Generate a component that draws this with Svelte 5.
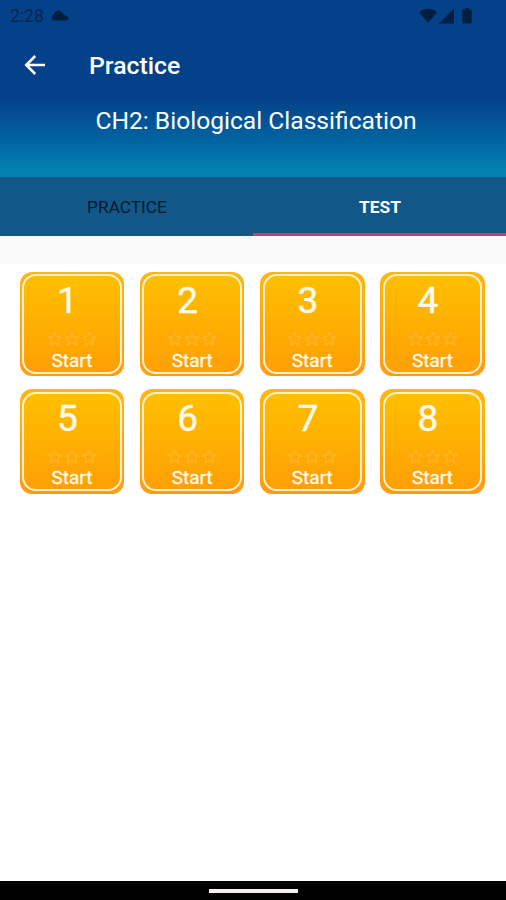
<script lang="ts">
  const tabs = ["PRACTICE", "TEST"];
  const levels = [1, 2, 3, 4, 5, 6, 7, 8];

  let activeTab = $state("TEST");
</script>

<div class="screen">
  <header>
    <div class="status">
      <span class="clock">2:28</span>
      <svg class="cloud" width="18" height="11" viewBox="0 0 18 11">
        <path d="M3 10.500H15.500C18 10.500 18 7.500 16 6.500L12 4C11 1 9 .5 7.500.5 5 .5 3.500 2 3 4.500 0 5.500 0 10.500 3 10.500z" />
      </svg>
      <svg class="system" width="56" height="17" viewBox="0 0 56 17">
        <path d="M1 4.200C6.500-.4 13.500-.4 19 4.200L10 15z" />
        <path d="M36 .500V15.500H21z" />
        <path d="M45.500 1.500h1.500V0h4v1.500h1.500q1.200 0 1.200 1.200v11.600q0 1.200-1.200 1.200h-7q-1.200 0-1.200-1.200V2.700q0-1.200 1.200-1.200z" />
      </svg>
    </div>
    <div class="toolbar">
      <button class="back" aria-label="Back">
        <svg width="22" height="20" viewBox="0 0 22 20">
          <path d="M21 10H2.500M11.200 1L2.200 10l9 9" />
        </svg>
      </button>
      <h1>Practice</h1>
    </div>
    <h2>CH2: Biological Classification</h2>
  </header>

  <nav>
    {#each tabs as tab (tab)}
      <button class="tab" class:active={activeTab === tab} onclick={() => (activeTab = tab)}>
        {tab}
      </button>
    {/each}
  </nav>

  <main>
    <div class="grid">
      {#each levels as level (level)}
        <button class="tile">
          <span class="frame">
            <span class="number">{level}</span>
            <svg class="stars" width="50" height="16" viewBox="0 0 52 16">
              {#each [0, 18, 36] as x (x)}
                <path
                  transform="translate({x} 0)"
                  d="M8 1l1.900 4.900 5.200.3-4 3.300 1.300 5.100L8 11.800l-4.400 2.800 1.300-5.100-4-3.300 5.200-.3z"
                />
              {/each}
            </svg>
            <span class="start">Start</span>
          </span>
        </button>
      {/each}
    </div>
  </main>

  <footer><span class="handle"></span></footer>
</div>

<style>
  :global(body) {
    margin: 0;
  }

  .screen {
    display: flex;
    flex-direction: column;
    width: 506px;
    height: 900px;
    overflow: hidden;
    background: #fff;
    font-family: Roboto, "Liberation Sans", sans-serif;
  }

  button {
    margin: 0;
    padding: 0;
    border: 0;
    background: none;
    font-family: inherit;
    cursor: pointer;
  }

  header {
    height: 177px;
    flex: none;
    color: #fff;
    background: linear-gradient(#044188 0, #044188 98px, #0262a0 138px, #0283b1 171px, #0282b0 177px);
  }

  .status {
    display: flex;
    align-items: center;
    height: 32px;
    padding: 0 32px 0 10px;
    color: #03264f;
  }

  .status svg {
    fill: #021f40;
  }

  .clock {
    width: 34px;
    margin-right: 7px;
    font-size: 17.5px;
    line-height: 32px;
  }

  .status .cloud {
    margin-bottom: 2px;
  }

  .system {
    margin-left: auto;
  }

  .toolbar {
    display: flex;
    align-items: center;
    height: 66px;
  }

  .back {
    display: flex;
    margin: 0 43px 0 24px;
  }

  .back path {
    fill: none;
    stroke: #fff;
    stroke-width: 2.5;
  }

  h1 {
    margin: 2px 0 0;
    font-size: 24.8px;
    font-weight: 500;
    line-height: 30px;
  }

  h2 {
    margin: 7px 0 0;
    padding-left: 6px;
    font-size: 24.6px;
    font-weight: 400;
    line-height: 32px;
    text-align: center;
  }

  nav {
    display: flex;
    flex: none;
    height: 59px;
    background: #115788;
  }

  .tab {
    flex: 1;
    padding: 4px 0 0 1px;
    border-bottom: 3px solid transparent;
    color: #041a2b;
    font-size: 17.3px;
    font-weight: 400;
  }

  .tab.active {
    border-color: #c53c70;
    color: #fff;
    font-weight: 700;
  }

  main {
    flex: 1;
    border-top: 28px solid #fafafa;
  }

  .grid {
    display: grid;
    grid-template-columns: repeat(4, 104.5px);
    gap: 13px 15.7px;
    padding: 7.5px 0 0 19.7px;
  }

  .tile {
    height: 104.5px;
    padding: 2.5px;
    border-radius: 12px;
    background: linear-gradient(#ffb70b, #ff9c14);
  }

  .frame {
    display: flex;
    flex-direction: column;
    align-items: center;
    box-sizing: border-box;
    height: 99.5px;
    border: 2px solid #fff0cf;
    border-radius: 14px;
    background: linear-gradient(#ffbf00, #ff9f05);
    color: #fffaf0;
  }

  .number {
    margin: 3px 9px 0 0;
    font-size: 37px;
    line-height: 44px;
    -webkit-text-stroke: 0.4px #fffaf0;
  }

  .stars {
    margin-top: 8px;
    fill: none;
    stroke: #ffbc45;
    stroke-width: 0.9;
  }

  .start {
    margin-top: 3px;
    font-size: 19px;
    line-height: 22px;
    -webkit-text-stroke: 0.3px #fffaf0;
  }

  footer {
    display: flex;
    justify-content: center;
    flex: none;
    height: 19px;
    background: #000;
  }

  .handle {
    width: 89px;
    height: 4px;
    margin-top: 8px;
    background: #f3eff3;
  }
</style>
